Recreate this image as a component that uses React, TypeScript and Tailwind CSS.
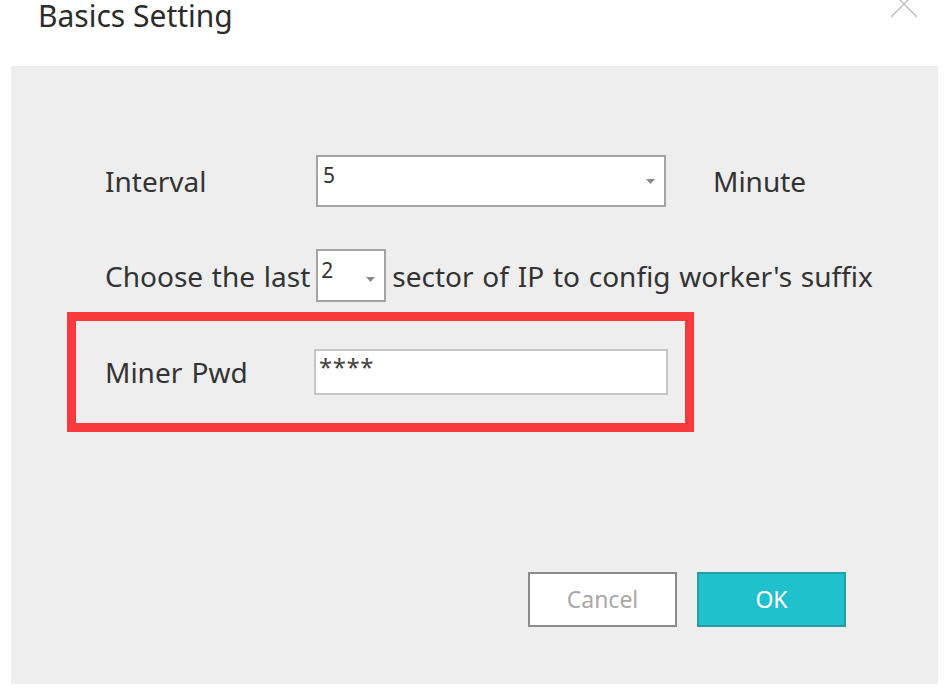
const font = { fontFamily: '"Noto Sans", "Open Sans", sans-serif' };

function Caret() {
  return (
    <svg className="h-[5px] w-[9px] shrink-0" viewBox="0 0 9 5" aria-hidden="true">
      <path d="M0 0h9L4.5 5z" fill="#8a8a8a" />
    </svg>
  );
}

function CloseIcon() {
  return (
    <svg className="-mt-[9px] h-[27px] w-[28px]" viewBox="0 0 28 27" aria-hidden="true">
      <path d="M1 0L27 26M27 0L1 26" stroke="#c4c4c4" strokeWidth="1.6" fill="none" />
    </svg>
  );
}

export default function App() {
  return (
    <div className="flex h-[690px] w-[944px] flex-col bg-white text-[#333333]" style={font}>
      <header className="flex h-[66px] shrink-0 items-start justify-between pl-[38px] pr-[26px]">
        <h1 className="pt-[1px] text-[30px] leading-[30px] text-[#2b2b2b]">Basics Setting</h1>
        <CloseIcon />
      </header>

      <main className="ml-[11px] mr-[6px] flex h-[618px] flex-col bg-[#eeeeee] pl-[56px] pt-[89px] text-[28px]">
        <div className="flex h-[52px] items-center pl-[38px]">
          <span className="w-[211px] shrink-0">Interval</span>
          <div className="flex h-[52px] w-[350px] shrink-0 items-start justify-between border-2 border-[#a3a3a3] bg-white pl-[5px] pr-[9px]">
            <span className="pt-[8px] text-[21px] leading-[21px]">5</span>
            <span className="self-center">
              <Caret />
            </span>
          </div>
          <span className="ml-[47px] [word-spacing:1px]">Minute</span>
        </div>

        <div className="mt-[42px] flex h-[53px] items-center pl-[38px] [word-spacing:1.5px]">
          <span className="whitespace-nowrap">Choose the last</span>
          <div className="ml-[6px] flex h-[53px] w-[70px] shrink-0 items-start justify-between border-2 border-[#a3a3a3] bg-white pl-[3px] pr-[9px]">
            <span className="pt-[9px] text-[21px] leading-[21px]">2</span>
            <span className="self-center pt-[8px]">
              <Caret />
            </span>
          </div>
          <span className="ml-[6px] whitespace-nowrap">sector of IP to config worker's suffix</span>
        </div>

        <div className="mt-[10px] flex h-[120px] w-[627px] items-center border-[9px] border-[#f83a3c] pl-[29px]">
          <span className="w-[209px] shrink-0 [word-spacing:2px]">Miner Pwd</span>
          <div className="h-[46px] w-[354px] shrink-0 border-2 border-[#c6c6c6] bg-white pl-[3px]">
            <span className="block pt-[4px] text-[24px] leading-[24px] tracking-[0.5px] text-[#444]">****</span>
          </div>
        </div>

        <div className="mr-[92px] mt-[140px] flex justify-end gap-[20px]">
          <button
            className="flex h-[55px] w-[149px] items-center justify-center border-2 border-[#8c8c8c] bg-white text-[23px] text-[#a9a9a9]"
            type="button"
          >
            Cancel
          </button>
          <button
            className="flex h-[55px] w-[149px] items-center justify-center border-2 border-[#2a9ca3] bg-[#1fc1cc] text-[23px] text-white"
            type="button"
          >
            OK
          </button>
        </div>
      </main>
    </div>
  );
}
